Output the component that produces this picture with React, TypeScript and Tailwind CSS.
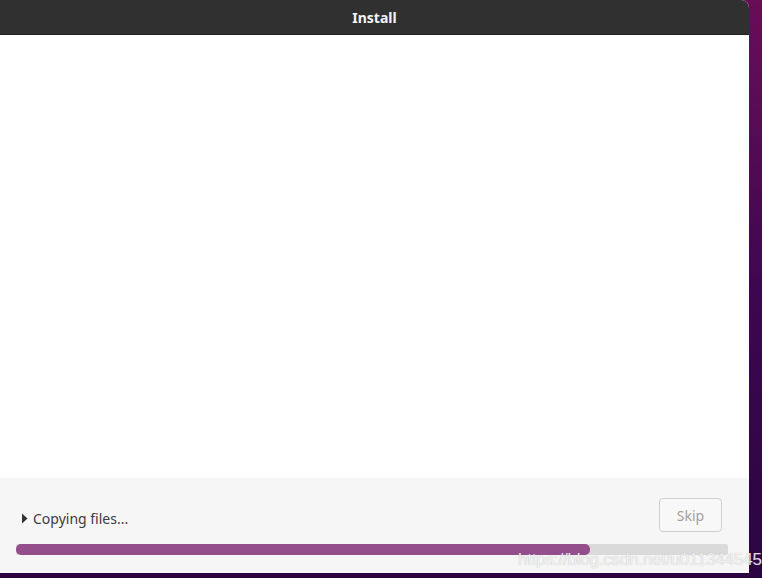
export default function App() {
  return (
    <div className="relative h-[578px] w-[762px] overflow-hidden bg-gradient-to-b from-[#6a0c58] via-[#3e0650] to-[#2a0542] font-['Noto_Sans',sans-serif]">
      <div className="flex h-[573px] w-[749px] flex-col overflow-hidden rounded-tr-[8px] bg-white">
        <div className="flex h-[35px] shrink-0 items-center justify-center border-b border-[#1f1f1f] bg-[#303030]">
          <span className="text-[14px] font-bold text-[#f4f4f4]">Install</span>
        </div>
        <div className="flex-1 bg-white" />
        <div className="flex h-[95px] shrink-0 flex-col bg-[#f6f6f6] px-[16px] pt-[20px]">
          <div className="flex items-end justify-between pl-[5px] pr-[11px]">
            <div className="flex items-center gap-[5px] pb-[3px] text-[14px] text-[#3c3c3c]">
              <svg width="7" height="11" viewBox="0 0 7 11">
                <path d="M1 0.5 L6.5 5.5 L1 10.5 Z" fill="#333" />
              </svg>
              <span>Copying files...</span>
            </div>
            <button className="flex h-[34px] w-[63px] items-center justify-center rounded-[4px] border border-[#cfcfcf] bg-[#f8f8f8] text-[14px] text-[#a0a0a0]">
              Skip
            </button>
          </div>
          <div className="mt-[12px] h-[11px] w-[712px] rounded-[2px] bg-[#dadada]">
            <div className="h-full w-[574px] rounded-[5px] bg-[#944e8b]" />
          </div>
        </div>
      </div>
      <span className="absolute left-[518px] top-[547px] font-['Liberation_Sans',sans-serif] text-[17px] tracking-[-0.2px] text-white/80 [text-shadow:0_0_1px_rgba(120,120,120,0.6)]">
        https://blog.csdn.net/u011344545
      </span>
    </div>
  );
}
